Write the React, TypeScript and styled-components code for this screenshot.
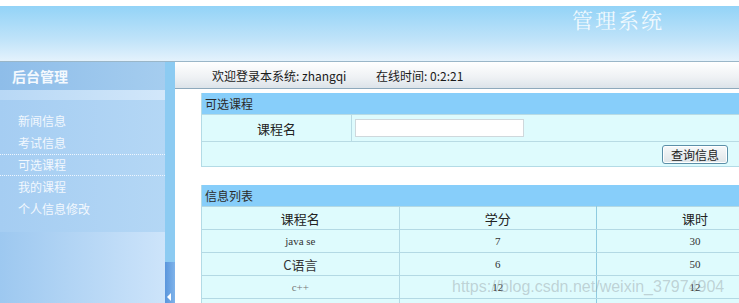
import styled, { createGlobalStyle } from "styled-components";

const GlobalStyle = createGlobalStyle`
  html, body {
    margin: 0;
    padding: 0;
    background: #fff;
    overflow: hidden;
  }
  body {
    font-family: "Noto Sans CJK SC", "Liberation Sans", sans-serif;
    font-size: 12px;
    color: #222;
  }
`;

const Page = styled.div`
  width: 739px;
  height: 303px;
  display: flex;
  flex-direction: column;
  overflow: hidden;
  position: relative;
  padding-top: 6px;
  box-sizing: border-box;
`;

const Header = styled.div`
  height: 55px;
  flex-shrink: 0;
  background: linear-gradient(#93d3f7, #bfe3f9 60%, #e4f2fc);
  padding-left: 572px;
  box-sizing: border-box;
`;

const SystemTitle = styled.div`
  font-family: "Noto Serif CJK SC", "Noto Sans CJK SC", serif;
  font-size: 21px;
  letter-spacing: 2px;
  color: rgba(255, 255, 255, 0.85);
  line-height: 26px;
`;

const Body = styled.div`
  flex: 1;
  display: flex;
  min-height: 0;
  border-top: 1px solid #9ab6c8;
`;

const Sidebar = styled.div`
  width: 165px;
  flex-shrink: 0;
  display: flex;
  flex-direction: column;
  background: linear-gradient(90deg, #9dc8f0, #cde4fa);
`;

const SideTitle = styled.div`
  height: 28px;
  line-height: 28px;
  padding-left: 12px;
  background: linear-gradient(90deg, #8ebde9, #a5cdef);
  color: #f4f9fe;
  font-size: 14px;
  font-weight: bold;
`;

const SideBand = styled.div`
  height: 10px;
  background: linear-gradient(90deg, #b8d8f5, #d2e7fa);
`;

const Menu = styled.div`
  height: 132px;
  padding-top: 10px;
  box-sizing: border-box;
  background: linear-gradient(90deg, #a5cdf2, #b4d7f5);
`;

const MenuItem = styled.div<{ $active?: boolean }>`
  height: 22px;
  line-height: 20px;
  padding-left: 18px;
  color: #f2f8fe;
  font-size: 12px;
  box-sizing: border-box;
  border: 1px dotted ${(p) => (p.$active ? "#eef6ff" : "transparent")};
  border-left: none;
  border-right: none;
`;

const Strip = styled.div`
  width: 10px;
  flex-shrink: 0;
  background: #8ccbf2;
  display: flex;
  flex-direction: column;
  justify-content: flex-end;
`;

const Thumb = styled.div`
  height: 41px;
  background: linear-gradient(90deg, #5a96dc, #7fb3ea);
  position: relative;
  &::after {
    content: "";
    position: absolute;
    left: 2px;
    bottom: 2px;
    border-top: 4px solid transparent;
    border-bottom: 4px solid transparent;
    border-right: 4px solid #fff;
  }
`;

const Main = styled.div`
  flex: 1;
  background: #fff;
  border-top-left-radius: 6px;
  display: flex;
  flex-direction: column;
  min-width: 0;
`;

const TopBar = styled.div`
  height: 26px;
  flex-shrink: 0;
  display: flex;
  align-items: center;
  padding-left: 37px;
  background: linear-gradient(#ffffff, #eef1f4 60%, #dce3e9);
  border-bottom: 1px solid #8ea9bc;
  border-top-left-radius: 6px;
  font-size: 12px;
  color: #1a1a1a;
`;

const Welcome = styled.span`
  width: 164px;
`;

const Content = styled.div`
  padding: 4px 0 0 26px;
  width: 593px;
`;

const Block = styled.div<{ $gap?: number }>`
  border-left: 1px solid #b3dbe6;
  border-bottom: 1px solid #b3dbe6;
  margin-bottom: ${(p) => p.$gap ?? 0}px;
  background: #defbfd;
`;

const BlockHead = styled.div`
  height: 21px;
  line-height: 21px;
  padding-left: 3px;
  background: #87cefa;
  color: #2b2b2b;
  font-size: 12px;
`;

const FormRow = styled.div<{ $h: number }>`
  height: ${(p) => p.$h}px;
  display: flex;
  align-items: center;
  border-top: 1px solid #b8dbe4;
  box-sizing: border-box;
`;

const LabelCell = styled.div`
  width: 149px;
  height: 100%;
  display: flex;
  align-items: center;
  justify-content: center;
  border-right: 1px solid #b8dbe4;
  font-size: 13px;
  color: #222;
`;

const Input = styled.input`
  margin-left: 3px;
  width: 169px;
  height: 18px;
  box-sizing: border-box;
  border: 1px solid #cfd8dc;
  background: #fff;
  outline: none;
`;

const ButtonRow = styled(FormRow)`
  justify-content: flex-end;
  padding-right: 66px;
`;

const QueryButton = styled.button`
  width: 66px;
  height: 19px;
  padding: 0;
  font-family: "Noto Sans CJK SC", sans-serif;
  font-size: 12px;
  line-height: 17px;
  color: #222;
  border: 1px solid #5b8fa8;
  border-radius: 3px;
  background: linear-gradient(#f7f9fa, #dfe5e8);
  box-shadow: inset 0 0 0 1px #fff;
`;

const Table = styled.table`
  width: 100%;
  border-collapse: collapse;
  background: #defbfd;
`;

const Th = styled.td`
  height: 22px;
  text-align: center;
  font-size: 13px;
  color: #222;
  border: 1px solid #b3d9e4;
  border-left: none;
  padding: 0;
  width: 33.3%;
  &:nth-child(2) {
    border-right-color: #8ecbe0;
  }
`;

const Td = styled.td<{ $sans?: boolean; $light?: boolean }>`
  height: 22px;
  text-align: center;
  font-family: ${(p) =>
    p.$sans ? '"Noto Sans CJK SC", sans-serif' : '"Liberation Serif", "Noto Sans CJK SC", serif'};
  font-size: ${(p) => (p.$sans ? "13px" : "11px")};
  color: ${(p) => (p.$light ? "#777" : "#333")};
  border: 1px solid #b3d9e4;
  border-left: none;
  padding: 0;
  &:nth-child(2) {
    border-right-color: #8ecbe0;
  }
`;

const Watermark = styled.div`
  position: absolute;
  left: 452px;
  top: 278px;
  font-family: "Liberation Sans", sans-serif;
  font-size: 16px;
  color: rgba(150, 160, 165, 0.45);
  pointer-events: none;
`;

const menu = ["新闻信息", "考试信息", "可选课程", "我的课程", "个人信息修改"];

const rows = [
  { name: "java se", credit: "7", hours: "30" },
  { name: "C语言", credit: "6", hours: "50", sans: true },
  { name: "c++", credit: "12", hours: "12", light: true },
];

export default function App() {
  return (
    <Page>
      <GlobalStyle />
      <Header>
        <SystemTitle>管理系统</SystemTitle>
      </Header>
      <Body>
        <Sidebar>
          <SideTitle>后台管理</SideTitle>
          <SideBand />
          <Menu>
            {menu.map((m) => (
              <MenuItem key={m} $active={m === "可选课程"}>
                {m}
              </MenuItem>
            ))}
          </Menu>
        </Sidebar>
        <Strip>
          <Thumb />
        </Strip>
        <Main>
          <TopBar>
            <Welcome>欢迎登录本系统: zhangqi</Welcome>
            <span>在线时间: 0:2:21</span>
          </TopBar>
          <Content>
            <Block $gap={18}>
              <BlockHead>可选课程</BlockHead>
              <FormRow $h={27}>
                <LabelCell>课程名</LabelCell>
                <Input />
              </FormRow>
              <ButtonRow $h={25}>
                <QueryButton>查询信息</QueryButton>
              </ButtonRow>
            </Block>
            <Block>
              <BlockHead>信息列表</BlockHead>
              <Table>
                <tbody>
                  <tr>
                    <Th>课程名</Th>
                    <Th>学分</Th>
                    <Th>课时</Th>
                  </tr>
                  {rows.map((r) => (
                    <tr key={r.name}>
                      <Td $sans={r.sans} $light={r.light}>{r.name}</Td>
                      <Td>{r.credit}</Td>
                      <Td>{r.hours}</Td>
                    </tr>
                  ))}
                  <tr>
                    <Td />
                    <Td />
                    <Td />
                  </tr>
                </tbody>
              </Table>
            </Block>
          </Content>
        </Main>
      </Body>
      <Watermark>https://blog.csdn.net/weixin_37974904</Watermark>
    </Page>
  );
}
